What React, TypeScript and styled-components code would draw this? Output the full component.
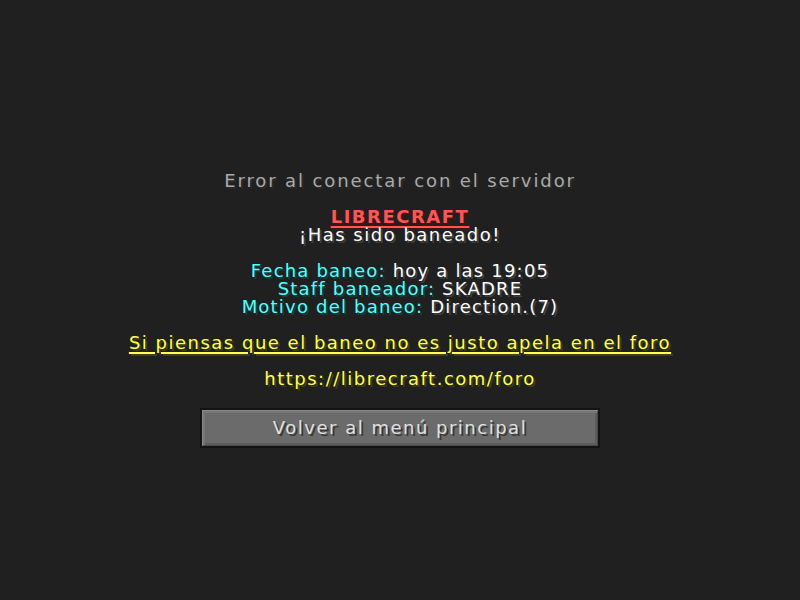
import React from 'react';
import styled, { createGlobalStyle } from 'styled-components';

const GlobalStyle = createGlobalStyle`
  html, body {
    margin: 0;
    padding: 0;
    background: #202020;
  }
  body {
    font-family: 'DejaVu Sans', 'Liberation Sans', sans-serif;
  }
`;

const shadows: Record<string, string> = {
  '#aaaaaa': '#2a2a2a',
  '#ff5555': '#3f1515',
  '#ffffff': '#3f3f3f',
  '#55ffff': '#153f3f',
  '#ffff55': '#3f3f15',
};

const Screen = styled.div`
  width: 800px;
  height: 600px;
  display: flex;
  flex-direction: column;
  align-items: center;
  padding-top: 172px;
  box-sizing: border-box;
  font-size: 18px;
  line-height: 18px;
  letter-spacing: 1.5px;
`;

const Line = styled.div<{ $color?: string }>`
  height: 18px;
  white-space: nowrap;
  color: ${(p) => p.$color || '#ffffff'};
  text-shadow: 2px 2px 0 ${(p) => shadows[p.$color || '#ffffff']};
`;

const Title = styled(Line)`
  margin-bottom: 18px;
  letter-spacing: 1.9px;
`;

const Reason = styled.div`
  display: flex;
  flex-direction: column;
  align-items: center;
`;

const Part = styled.span<{ $color: string }>`
  color: ${(p) => p.$color};
  text-shadow: 2px 2px 0 ${(p) => shadows[p.$color]};
`;

const DetailLine = styled(Line)`
  letter-spacing: 1.2px;
`;

const ServerName = styled(Line)`
  font-weight: bold;
  text-decoration: underline;
  text-decoration-thickness: 2px;
  text-underline-offset: 3px;
`;

const Appeal = styled(Line)`
  text-decoration: underline;
  text-decoration-thickness: 2px;
  text-underline-offset: 3px;
`;

const MenuButton = styled.button`
  margin-top: 20px;
  width: 400px;
  height: 40px;
  box-sizing: border-box;
  background: #6b6b6b;
  border: 2px solid #131313;
  box-shadow: inset 1px 1px 0 #8a8a8a, inset -1px -1px 0 #4a4a4a, inset 3px 3px 0 #767676,
    inset -3px -3px 0 #5c5c5c;
  color: #e0e0e0;
  text-shadow: 2px 2px 0 #383838;
  font-family: inherit;
  font-size: 18px;
  line-height: 18px;
  letter-spacing: 1.5px;
  padding: 0;
  cursor: pointer;
`;

export default function App() {
  return (
    <>
      <GlobalStyle />
      <Screen>
        <Title $color="#aaaaaa">Error al conectar con el servidor</Title>
        <Reason>
          <ServerName $color="#ff5555">LIBRECRAFT</ServerName>
          <Line>¡Has sido baneado!</Line>
          <Line />
          <DetailLine>
            <Part $color="#55ffff">Fecha baneo: </Part>
            <Part $color="#ffffff">hoy a las 19:05</Part>
          </DetailLine>
          <DetailLine>
            <Part $color="#55ffff">Staff baneador: </Part>
            <Part $color="#ffffff">SKADRE</Part>
          </DetailLine>
          <DetailLine>
            <Part $color="#55ffff">Motivo del baneo: </Part>
            <Part $color="#ffffff">Direction.(7)</Part>
          </DetailLine>
          <Line />
          <Appeal $color="#ffff55">Si piensas que el baneo no es justo apela en el foro</Appeal>
          <Line />
          <Line $color="#ffff55">https://librecraft.com/foro</Line>
        </Reason>
        <MenuButton>Volver al menú principal</MenuButton>
      </Screen>
    </>
  );
}
